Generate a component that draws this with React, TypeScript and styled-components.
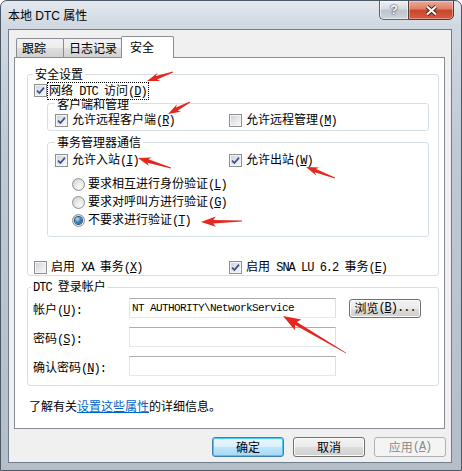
import React from "react";
import styled, { createGlobalStyle } from "styled-components";

const SANS = `"Liberation Sans", "Noto Sans CJK SC", sans-serif`;
const CJK = `"Noto Sans CJK SC", sans-serif`;

const GlobalStyle = createGlobalStyle`
  html, body {
    margin: 0;
    padding: 0;
    background: #fff;
  }
  body {
    width: 462px;
    height: 471px;
    overflow: hidden;
  }
  * {
    box-sizing: border-box;
  }
`;

const Window = styled.div`
  position: relative;
  width: 462px;
  height: 471px;
  display: flex;
  flex-direction: column;
  border: 1px solid #4b5866;
  border-radius: 7px 7px 0 0;
  background: linear-gradient(
    180deg,
    #e4e9ef 0%,
    #d0d8e1 5%,
    #c0cad5 30%,
    #b4bec9 100%
  );
  overflow: hidden;
`;

const TitleBar = styled.div`
  height: 28px;
  flex: none;
  display: flex;
  align-items: center;
  justify-content: space-between;
  padding-left: 7px;
`;

const Title = styled.span`
  font: 12px/14px ${SANS};
  color: #000;
  margin-top: 1px;
`;

const CaptionGroup = styled.div`
  display: flex;
  align-self: flex-start;
  margin: -1px 7px 0 0;
`;

const HelpButton = styled.div`
  width: 29px;
  height: 20px;
  border: 1px solid #5b6470;
  border-right: none;
  border-radius: 0 0 0 5px;
  background: linear-gradient(180deg, #eef1f4 0%, #d5dbe2 45%, #bcc5cf 50%, #cbd3dc 100%);
  box-shadow: inset 0 0 0 1px rgba(255, 255, 255, 0.55);
  display: flex;
  align-items: center;
  justify-content: center;
  font: bold 13px/14px ${SANS};
  color: #fff;
  text-shadow: 0 0 1px #2c3440, 0 0 2px #2c3440;
`;

const CloseButton = styled.div`
  width: 46px;
  height: 20px;
  border: 1px solid #5a3a34;
  border-radius: 0 0 5px 0;
  background: linear-gradient(180deg, #eda997 0%, #df7d66 45%, #c9452c 50%, #d65c3e 100%);
  box-shadow: inset 0 0 0 1px rgba(255, 255, 255, 0.35);
  display: flex;
  align-items: center;
  justify-content: center;
`;

const Client = styled.div`
  flex: 1;
  margin: 0 9px 7px 7px;
  border: 1px solid #6f7d8c;
  background: #f0f0f0;
  display: flex;
  flex-direction: column;
  padding: 6px 5px 0 5px;
`;

const TabStrip = styled.div`
  display: flex;
  align-items: flex-end;
  height: 21px;
  padding-left: 2px;
`;

const Tab = styled.div<{ $active?: boolean; $w: number }>`
  width: ${(p) => p.$w}px;
  height: ${(p) => (p.$active ? 22 : 19)}px;
  margin-left: ${(p) => (p.$active ? -2 : -1)}px;
  margin-bottom: ${(p) => (p.$active ? -1 : 0)}px;
  position: relative;
  z-index: ${(p) => (p.$active ? 1 : 0)};
  border: 1px solid #898c95;
  border-bottom: none;
  border-radius: 2px 2px 0 0;
  padding-left: ${(p) => (p.$active ? 8 : 5)}px;
  background: ${(p) =>
    p.$active
      ? "#fff"
      : "linear-gradient(180deg, #f3f3f3 0%, #ececec 50%, #dedede 51%, #d2d2d2 100%)"};
  font: 12px/${(p) => (p.$active ? 19 : 18)}px ${CJK};
  color: #000;

  &:first-child {
    margin-left: 0;
  }
`;

const Panel = styled.div`
  width: 431px;
  height: 372px;
  border: 1px solid #898c95;
  background: #fff;
  display: flex;
  flex-direction: column;
`;

const Group = styled.fieldset<{ $x: number; $w: number; $top: number }>`
  margin: ${(p) => p.$top}px 0 0 ${(p) => p.$x}px;
  width: ${(p) => p.$w}px;
  padding: 0;
  border: 1px solid #d5dfe5;
  border-radius: 3px;
  min-width: 0;
`;

const Legend = styled.legend<{ $x: number; $lh?: number }>`
  margin-left: ${(p) => p.$x}px;
  padding: 0 2px;
  font: 12px/${(p) => p.$lh || 14}px ${CJK};
  color: #000;
  white-space: nowrap;
`;

// half-width latin, like the dialog font's narrow ASCII glyphs
const Lat = styled.span`
  font-family: "Liberation Mono", monospace;
  font-size: 12px;
  letter-spacing: -1px;
`;

const GroupBody = styled.div<{ $pad: string }>`
  padding: ${(p) => p.$pad};
  display: flex;
  flex-direction: column;
`;

const CheckRow = styled.div<{ $cols?: string; $top?: number; $h?: number }>`
  display: grid;
  grid-template-columns: ${(p) => p.$cols || "auto"};
  height: ${(p) => p.$h || 14}px;
  margin-top: ${(p) => p.$top || 0}px;
  align-items: center;
`;

const CheckItem = styled.label<{ $gap?: number }>`
  display: flex;
  align-items: center;
  gap: ${(p) => (p.$gap === undefined ? 3 : p.$gap)}px;
  height: 13px;
`;

const CheckBox = styled.span`
  flex: none;
  width: 13px;
  height: 13px;
  border: 1px solid #8e8f8f;
  background: linear-gradient(135deg, #c9cdd3 0%, #e3e5e9 45%, #f8f8f8 100%);
  box-shadow: inset 0 0 0 1px #f4f4f4;
  display: inline-flex;
  align-items: center;
  justify-content: center;
`;

const LabelText = styled.span<{ $focus?: boolean }>`
  font: 12px/13px ${CJK};
  color: #000;
  white-space: nowrap;
  padding: 0 1px;
  outline: ${(p) => (p.$focus ? "1px dotted #000" : "none")};
  outline-offset: 0;
`;

const RadioList = styled.div`
  display: flex;
  flex-direction: column;
  margin-top: 8px;
  padding-left: 17px;
`;

const RadioItem = styled.label`
  display: flex;
  align-items: center;
  gap: 2px;
  height: 18px;
`;

const RadioDot = styled.span<{ $on?: boolean }>`
  flex: none;
  width: 13px;
  height: 13px;
  border-radius: 50%;
  border: 1px solid #8e8f8f;
  background: radial-gradient(circle at 65% 70%, #fbfbfb 0%, #e6e7ea 45%, #c8ccd2 100%);
  display: flex;
  align-items: center;
  justify-content: center;

  &::after {
    content: "";
    display: ${(p) => (p.$on ? "block" : "none")};
    width: 7px;
    height: 7px;
    border-radius: 50%;
    background: radial-gradient(circle at 35% 30%, #b4e0fa 0%, #3a86c2 45%, #143f6a 100%);
    box-shadow: 0 0 0 1px #2b4f78;
  }
`;

const FieldRow = styled.div<{ $top?: number }>`
  display: flex;
  align-items: center;
  height: 20px;
  margin-top: ${(p) => p.$top || 0}px;
`;

const FieldLabel = styled.span`
  width: 96px;
  flex: none;
  font: 12px/14px ${CJK};
  color: #000;
  margin-top: 3px;
  white-space: nowrap;
`;

const Input = styled.div`
  width: 207px;
  height: 20px;
  border: 1px solid #abadb3;
  border-right-color: #dbdfe6;
  border-bottom-color: #e3e9ef;
  border-left-color: #e2e3ea;
  background: #fff;
  padding: 2px 0 0 2px;
  font: 11px/14px "Liberation Mono", monospace;
  letter-spacing: -0.6px;
  color: #000;
  white-space: nowrap;
`;

const Button = styled.div<{ $kind?: "default" | "disabled"; $w?: number; $h?: number; $ml?: number }>`
  width: ${(p) => p.$w || 72}px;
  height: ${(p) => p.$h || 20}px;
  margin-left: ${(p) => p.$ml || 0}px;
  flex: none;
  border-radius: 3px;
  border: 1px solid
    ${(p) =>
      p.$kind === "default" ? "#3c7fb1" : p.$kind === "disabled" ? "#adb2b5" : "#707070"};
  background: ${(p) =>
    p.$kind === "default"
      ? "linear-gradient(180deg, #eaf6fd 0%, #d9f0fc 50%, #bee6fd 51%, #a7d9f5 100%)"
      : p.$kind === "disabled"
      ? "#f4f4f4"
      : "linear-gradient(180deg, #f2f2f2 0%, #ebebeb 50%, #dddddd 51%, #cfcfcf 100%)"};
  box-shadow: inset 0 0 0 1px
    ${(p) => (p.$kind === "default" ? "#48c8f5" : p.$kind === "disabled" ? "#f4f4f4" : "#fcfcfc")};
  display: flex;
  align-items: center;
  justify-content: center;
  font: 12px/14px ${CJK};
  color: ${(p) => (p.$kind === "disabled" ? "#8b8b8b" : "#000")};
  white-space: nowrap;
`;

const InfoLine = styled.div`
  margin: 13px 0 0 14px;
  font: 12px/14px ${CJK};
  color: #000;
`;

const Link = styled.span`
  color: #0066cc;
  text-decoration: underline;
`;

const ButtonBar = styled.div`
  display: flex;
  justify-content: flex-end;
  gap: 9px;
  margin-top: 8px;
`;

const Overlay = styled.svg`
  position: absolute;
  left: -1px;
  top: -1px;
  width: 462px;
  height: 471px;
  pointer-events: none;
`;

const Check = () => (
  <svg width="9" height="9" viewBox="0 0 9 9">
    <path d="M1 4.6 L3.4 7 L8 1.6" fill="none" stroke="#3d5390" strokeWidth="1.8" />
  </svg>
);

const Key = ({ k, tail = "" }: { k: string; tail?: string }) => (
  <Lat>
    (<u>{k}</u>){tail}
  </Lat>
);

const CheckOption = ({
  label,
  k,
  checked,
  focus,
  gap,
}: {
  label: React.ReactNode;
  k: string;
  checked?: boolean;
  focus?: boolean;
  gap?: number;
}) => (
  <CheckItem $gap={gap}>
    <CheckBox>{checked && <Check />}</CheckBox>
    <LabelText $focus={focus}>
      {label}
      <Key k={k} />
    </LabelText>
  </CheckItem>
);

const RadioOption = ({ label, k, on }: { label: string; k: string; on?: boolean }) => (
  <RadioItem>
    <RadioDot $on={on} />
    <LabelText>
      {label}
      <Key k={k} />
    </LabelText>
  </RadioItem>
);

// tail x, tail y, tip x, tip y
const arrows: [number, number, number, number][] = [
  [173, 72, 147, 81],
  [190, 102, 168, 114],
  [171, 168, 138, 158],
  [335, 178, 306, 167],
  [242, 221, 201, 222],
  [346, 353, 283, 316],
];

const arrowPoints = ([x1, y1, x2, y2]: [number, number, number, number]) => {
  const len = Math.hypot(x2 - x1, y2 - y1);
  const ux = (x2 - x1) / len;
  const uy = (y2 - y1) / len;
  const nx = -uy;
  const ny = ux;
  const head = Math.min(15, Math.max(10, len * 0.3));
  const half = head * 0.42;
  const bx = x2 - ux * head;
  const by = y2 - uy * head;
  const sweep = 2.5;
  const pts = [
    [x1 + nx * 0.4, y1 + ny * 0.4],
    [bx + nx * 1.8, by + ny * 1.8],
    [bx - ux * sweep + nx * half, by - uy * sweep + ny * half],
    [x2, y2],
    [bx - ux * sweep - nx * half, by - uy * sweep - ny * half],
    [bx - nx * 1.8, by - ny * 1.8],
    [x1 - nx * 0.4, y1 - ny * 0.4],
  ];
  return pts.map(([x, y]) => `${x.toFixed(1)},${y.toFixed(1)}`).join(" ");
};

export default function App() {
  return (
    <>
      <GlobalStyle />
      <Window>
        <TitleBar>
          <Title>本地 DTC 属性</Title>
          <CaptionGroup>
            <HelpButton>?</HelpButton>
            <CloseButton>
              <svg width="13" height="11" viewBox="0 0 13 11">
                <path d="M2 1.5 L11 9.5 M11 1.5 L2 9.5" stroke="#4a1c12" strokeWidth="4" />
                <path d="M2 1.5 L11 9.5 M11 1.5 L2 9.5" stroke="#fff" strokeWidth="2.2" />
              </svg>
            </CloseButton>
          </CaptionGroup>
        </TitleBar>

        <Client>
          <TabStrip>
            <Tab $w={48}>跟踪</Tab>
            <Tab $w={60}>日志记录</Tab>
            <Tab $w={53} $active>
              安全
            </Tab>
          </TabStrip>

          <Panel>
            <Group $x={12} $w={412} $top={9}>
              <Legend $x={5}>安全设置</Legend>
              <GroupBody $pad="0 0 1px 6px">
                <CheckRow $top={3} $h={13}>
                  <CheckOption
                    label={
                      <>
                        网络<Lat> DTC </Lat>访问
                      </>
                    }
                    k="D"
                    checked
                    focus
                    gap={1}
                  />
                </CheckRow>

                <Group $x={13} $w={382} $top={0}>
                  <Legend $x={7} $lh={13}>
                    客户端和管理
                  </Legend>
                  <GroupBody $pad="3px 0 3px 7px">
                    <CheckRow $cols="174px 1fr">
                      <CheckOption label="允许远程客户端" k="R" checked />
                      <CheckOption label="允许远程管理" k="M" />
                    </CheckRow>
                  </GroupBody>
                </Group>

                <Group $x={13} $w={382} $top={4}>
                  <Legend $x={7}>事务管理器通信</Legend>
                  <GroupBody $pad="4px 0 7px 7px">
                    <CheckRow $cols="174px 1fr">
                      <CheckOption label="允许入站" k="I" checked />
                      <CheckOption label="允许出站" k="W" checked />
                    </CheckRow>
                    <RadioList>
                      <RadioOption label="要求相互进行身份验证" k="L" />
                      <RadioOption label="要求对呼叫方进行验证" k="G" />
                      <RadioOption label="不要求进行验证" k="T" on />
                    </RadioList>
                  </GroupBody>
                </Group>

                <CheckRow $cols="195px 1fr" $top={23}>
                  <CheckOption
                    label={
                      <>
                        启用<Lat> XA </Lat>事务
                      </>
                    }
                    k="X"
                  />
                  <CheckOption
                    label={
                      <>
                        启用<Lat> SNA LU 6.2 </Lat>事务
                      </>
                    }
                    k="E"
                    checked
                  />
                </CheckRow>
              </GroupBody>
            </Group>

            <Group $x={12} $w={412} $top={3}>
              <Legend $x={3}>
                <Lat>DTC </Lat>登录帐户
              </Legend>
              <GroupBody $pad="3px 0 9px 5px">
                <FieldRow>
                  <FieldLabel>
                    帐户<Key k="U" tail=":" />
                  </FieldLabel>
                  <Input>NT AUTHORITY\NetworkService</Input>
                  <Button $w={72} $h={19} $ml={13}>
                    浏览<Key k="B" tail="..." />
                  </Button>
                </FieldRow>
                <FieldRow $top={9}>
                  <FieldLabel>
                    密码<Key k="S" tail=":" />
                  </FieldLabel>
                  <Input />
                </FieldRow>
                <FieldRow $top={9}>
                  <FieldLabel>
                    确认密码<Key k="N" tail=":" />
                  </FieldLabel>
                  <Input />
                </FieldRow>
              </GroupBody>
            </Group>

            <InfoLine>
              了解有关<Link>设置这些属性</Link>的详细信息。
            </InfoLine>
          </Panel>

          <ButtonBar>
            <Button $kind="default">确定</Button>
            <Button>取消</Button>
            <Button $kind="disabled">
              应用<Key k="A" />
            </Button>
          </ButtonBar>
        </Client>

        <Overlay viewBox="0 0 462 471">
          {arrows.map((a, i) => (
            <polygon key={i} points={arrowPoints(a)} fill="#e4281f" />
          ))}
        </Overlay>
      </Window>
    </>
  );
}
